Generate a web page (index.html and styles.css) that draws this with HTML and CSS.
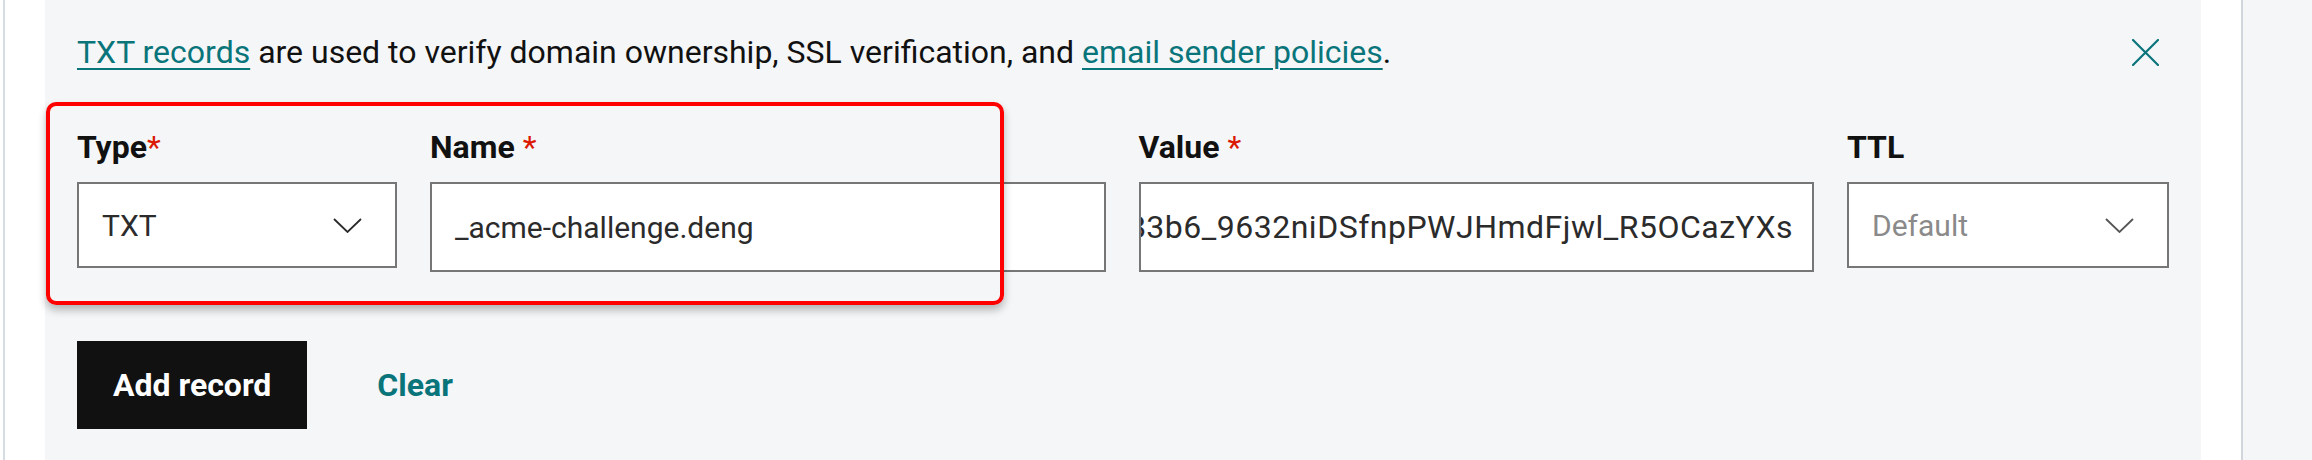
FILE: index.html
```html
<!DOCTYPE html>
<html lang="en">
<head>
<meta charset="utf-8">
<title>TXT record</title>
<link rel="stylesheet" href="styles.css">
</head>
<body>
<div class="page">
  <div class="rail-left"></div>
  <section class="panel">
    <div class="notice">
      <p class="notice-text"><a href="#" class="link">TXT records</a> are used to verify domain ownership, SSL verification, and <a href="#" class="link">email sender policies</a>.</p>
      <button class="close" aria-label="Close">
        <svg width="27" height="27" viewBox="0 0 27 27"><path d="M1 1 L26 26 M26 1 L1 26" fill="none" stroke="#09757a" stroke-width="2.2" stroke-linecap="round"/></svg>
      </button>
    </div>
    <div class="fields">
      <div class="field">
        <label class="label">Type<span class="req">*</span></label>
        <div class="select">
          <span>TXT</span>
          <svg class="chev" width="29" height="15" viewBox="0 0 29 15"><path d="M1 1 L14.5 14 L28 1" fill="none" stroke="#2b2b2b" stroke-width="1.8"/></svg>
        </div>
      </div>
      <div class="field">
        <label class="label">Name <span class="req">*</span></label>
        <div class="input"><span>_acme-challenge.deng</span></div>
      </div>
      <div class="field">
        <label class="label">Value <span class="req">*</span></label>
        <div class="input scrolled"><span>Kd83b6_9632niDSfnpPWJHmdFjwl_R5OCazYXs</span></div>
      </div>
      <div class="field">
        <label class="label">TTL</label>
        <div class="select">
          <span class="placeholder">Default</span>
          <svg class="chev" width="29" height="15" viewBox="0 0 29 15"><path d="M1 1 L14.5 14 L28 1" fill="none" stroke="#555" stroke-width="1.8"/></svg>
        </div>
      </div>
    </div>
    <div class="actions">
      <button class="btn-primary">Add record</button>
      <button class="btn-link">Clear</button>
    </div>
    <div class="highlight"></div>
  </section>
  <div class="gutter"></div>
  <div class="rail-right"></div>
</div>
</body>
</html>
```

FILE: styles.css
```css
html, body {
  margin: 0;
  padding: 0;
  background: #ffffff;
}

body {
  font-family: Roboto, "Liberation Sans", sans-serif;
  font-size: 32px;
  color: #111111;
  overflow: hidden;
}

.page {
  display: flex;
  height: 460px;
}

.rail-left {
  width: 40px;
  margin-left: 3px;
  border-left: 2px solid #d6dce1;
  flex: none;
}

.panel {
  position: relative;
  width: 2156px;
  flex: none;
  background: #f5f6f8;
  box-sizing: border-box;
  padding: 30px 32px 0 32px;
}

.gutter {
  width: 40px;
  flex: none;
}

.rail-right {
  flex: 1;
  border-left: 2px solid #d0d6db;
  background: #f5f6f8;
}

.notice {
  display: flex;
  align-items: center;
  justify-content: space-between;
  height: 45px;
}

.notice-text {
  margin: 0;
  line-height: 45px;
  white-space: nowrap;
}

.link {
  color: #09757a;
  text-decoration: underline;
  text-decoration-thickness: 2px;
  text-underline-offset: 5px;
}

.close {
  background: none;
  border: 0;
  padding: 0;
  margin-right: 10px;
  width: 27px;
  height: 27px;
  display: flex;
  cursor: pointer;
}

.fields {
  display: grid;
  grid-template-columns: 320px 1fr 1fr 322px;
  column-gap: 33px;
  margin-top: 50px;
  align-items: start;
}

.field {
  display: flex;
  flex-direction: column;
  min-width: 0;
}

.label {
  font-weight: 700;
  line-height: 45px;
  margin-bottom: 12px;
  color: #111111;
}

.req {
  color: #db1802;
  font-weight: 400;
}

.select,
.input {
  box-sizing: border-box;
  background: #ffffff;
  border: 2px solid #767676;
  display: flex;
  align-items: center;
  color: #2b2b2b;
  white-space: nowrap;
  font-size: 30px;
}

.select {
  height: 86px;
  padding: 0 33px 0 23px;
  justify-content: space-between;
}

.input {
  height: 90px;
  padding: 0 19px 0 23px;
  overflow: hidden;
}

.input.scrolled {
  justify-content: flex-end;
  font-size: 32px;
  letter-spacing: 0.5px;
}

.input.scrolled span {
  flex: none;
}

.placeholder {
  color: #8a8a8a;
}

.chev {
  flex: none;
}

.actions {
  display: flex;
  align-items: center;
  margin-top: 69px;
  gap: 34px;
}

.btn-primary {
  height: 88px;
  padding: 0 36px;
  background: #111111;
  color: #ffffff;
  border: 0;
  font-family: inherit;
  font-size: 32px;
  font-weight: 700;
}

.btn-link {
  height: 88px;
  padding: 0 36px;
  background: none;
  border: 0;
  color: #09757a;
  font-family: inherit;
  font-size: 32px;
  font-weight: 700;
}

.highlight {
  position: absolute;
  left: 1px;
  top: 102px;
  width: 958px;
  height: 203px;
  box-sizing: border-box;
  border: 4px solid #ff0000;
  border-radius: 10px;
  box-shadow: 0 5px 8px rgba(0, 0, 0, 0.28);
  pointer-events: none;
}
```
